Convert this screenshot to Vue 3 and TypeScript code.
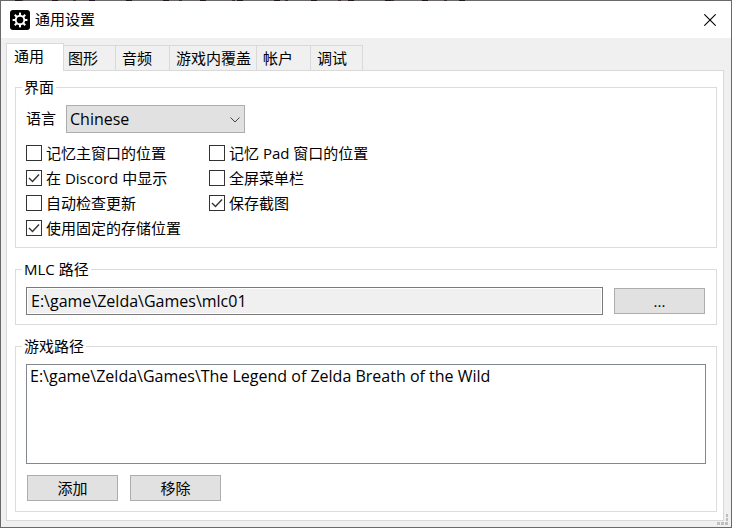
<script setup lang="ts">
import { ref } from 'vue'

interface Option {
  id: string
  label: string
  checked: boolean
}

const tabs: string[] = ['通用', '图形', '音频', '游戏内覆盖', '帐户', '调试']
const activeTab = ref(0)
const language = ref('Chinese')
const mlcPath = ref('E:\\game\\Zelda\\Games\\mlc01')
const gamePaths = ref<string[]>(['E:\\game\\Zelda\\Games\\The Legend of Zelda Breath of the Wild'])
const selectedPath = ref('')

const options = ref<Option[]>([
  { id: 'main-pos', label: '记忆主窗口的位置', checked: false },
  { id: 'pad-pos', label: '记忆 Pad 窗口的位置', checked: false },
  { id: 'discord', label: '在 Discord 中显示', checked: true },
  { id: 'menubar', label: '全屏菜单栏', checked: false },
  { id: 'updates', label: '自动检查更新', checked: false },
  { id: 'screenshot', label: '保存截图', checked: true },
  { id: 'storage', label: '使用固定的存储位置', checked: true },
])
</script>

<template>
  <div class="window">
    <header class="titlebar">
      <svg class="app-icon" viewBox="0 0 20 20" aria-hidden="true">
        <rect width="20" height="20" rx="3" fill="#000" />
        <g fill="#fff">
          <rect v-for="n in 8" :key="n" x="9" y="2.6" width="2" height="3.4" :transform="`rotate(${n * 45} 10 10)`" />
        </g>
        <circle cx="10" cy="10" r="4.3" fill="none" stroke="#fff" stroke-width="1.9" />
      </svg>
      <h1 class="title">通用设置</h1>
      <button class="close" type="button" aria-label="关闭">
        <svg viewBox="0 0 12 12" aria-hidden="true"><path d="M0.3 0.3 11.7 11.7M11.7 0.3 0.3 11.7" /></svg>
      </button>
    </header>

    <main class="body">
      <div class="tabs" role="tablist">
        <button
          v-for="(tab, i) in tabs"
          :key="tab"
          type="button"
          role="tab"
          class="tab"
          :class="{ active: i === activeTab }"
          :aria-selected="i === activeTab"
          @click="activeTab = i"
        >{{ tab }}</button>
      </div>

      <section class="panel" role="tabpanel">
        <fieldset class="group">
          <legend>界面</legend>
          <div class="language">
            <label for="language">语言</label>
            <span class="combo">
              <select id="language" v-model="language">
                <option>Chinese</option>
                <option>English</option>
              </select>
              <svg viewBox="0 0 10 6" aria-hidden="true"><path d="M0.5 0.5 5 5 9.5 0.5" /></svg>
            </span>
          </div>
          <div class="options">
            <label v-for="opt in options" :key="opt.id" class="option" :for="opt.id">
              <span class="box">
                <input :id="opt.id" v-model="opt.checked" type="checkbox" />
                <svg v-if="opt.checked" viewBox="0 0 16 16" aria-hidden="true"><path d="M3 8 6.5 11.5 13 4.5" /></svg>
              </span>
              <span>{{ opt.label }}</span>
            </label>
          </div>
        </fieldset>

        <fieldset class="group">
          <legend>MLC 路径</legend>
          <div class="path-row">
            <input class="path" type="text" aria-label="MLC 路径" readonly :value="mlcPath" />
            <button class="push" type="button">...</button>
          </div>
        </fieldset>

        <fieldset class="group">
          <legend>游戏路径</legend>
          <select v-model="selectedPath" class="list" size="4" aria-label="游戏路径">
            <option v-for="path in gamePaths" :key="path" :value="path">{{ path }}</option>
          </select>
          <div class="actions">
            <button class="push" type="button">添加</button>
            <button class="push" type="button">移除</button>
          </div>
        </fieldset>
      </section>

      <svg class="grip" viewBox="0 0 11 11" aria-hidden="true">
        <path d="M9 0h2v3h-2zM9 4h2v3h-2zM0 8h3v3h-3zM4 8h3v3h-3zM8 8h3v3h-3z" />
      </svg>
    </main>
  </div>
</template>

<style>
body {
  margin: 0;
}
</style>

<style scoped>
.window,
.window * {
  box-sizing: border-box;
}

.window {
  position: relative;
  display: flex;
  flex-direction: column;
  min-height: 100vh;
  border: 1px solid #6b6868;
  background: #f0f0f0;
  color: #000;
  font-family: "Open Sans", "Noto Sans CJK SC", sans-serif;
  font-size: 15px;
  line-height: 20px;
}

.window::before {
  content: "";
  position: absolute;
  top: -1px;
  left: 0;
  width: 476px;
  height: 1px;
  background:
    repeating-linear-gradient(90deg, transparent 0 14px, #211820 14px 20px, transparent 20px 37px),
    repeating-linear-gradient(90deg, transparent 0 19px, #3a2c2c 19px 22px, transparent 22px 53px);
}

button,
input,
select {
  margin: 0;
  font: inherit;
  color: inherit;
  border-radius: 0;
}

.titlebar {
  display: flex;
  align-items: center;
  height: 37px;
  padding-left: 9px;
  background: #fff;
}

.app-icon {
  width: 20px;
  height: 20px;
}

.title {
  flex: 1;
  margin: 0 0 0 5px;
  padding-bottom: 2px;
  font-size: 15px;
  font-weight: 400;
}

.close {
  display: flex;
  align-items: center;
  justify-content: center;
  width: 42px;
  height: 100%;
  padding: 0;
  border: 0;
  background: none;
}

.close svg {
  width: 12px;
  height: 12px;
  fill: none;
  stroke: #000;
  stroke-width: 1.1;
}

.body {
  position: relative;
  display: flex;
  flex: 1;
  flex-direction: column;
  padding: 5px 7px 6px 5px;
}

.tabs {
  display: flex;
  align-items: flex-end;
}

.tab {
  height: 25px;
  padding: 0 17px 0 6px;
  border: 1px solid #d9d9d9;
  border-width: 1px 1px 0 0;
  background: #f0f0f0;
  white-space: nowrap;
}

.tab:nth-child(2) {
  padding-left: 4px;
}

.tab:nth-child(4) {
  padding-right: 5px;
}

.tab:nth-child(6) {
  padding-right: 15px;
}

.tab.active {
  position: relative;
  height: 28px;
  margin-bottom: -1px;
  padding: 0 19px 3px 7px;
  border-left-width: 1px;
  background: #fff;
}

.panel {
  display: flex;
  flex: 1;
  flex-direction: column;
  gap: 11px;
  padding: 6px 6px 8px 8px;
  border: 1px solid #d9d9d9;
  background: #fff;
}

.group {
  min-width: 0;
  margin: 0;
  padding: 7px 10px 9px;
  border: 1px solid #dcdcdc;
}

.group:last-child {
  padding-bottom: 10px;
}

.group legend {
  height: 21px;
  margin-left: -4px;
  padding: 0 2px;
}

.language {
  display: flex;
  align-items: center;
  gap: 10px;
}

.language label {
  padding-bottom: 2px;
}

.combo {
  position: relative;
  width: 179px;
  height: 28px;
}

.combo select {
  width: 100%;
  height: 100%;
  padding: 0 24px 0 3px;
  border: 1px solid #adadad;
  background: #e1e1e1;
  font-size: 16px;
  appearance: none;
}

.combo svg {
  position: absolute;
  top: 12px;
  right: 5px;
  width: 10px;
  height: 6px;
  fill: none;
  stroke: #444;
  pointer-events: none;
}

.options {
  display: grid;
  grid-template-columns: 183px auto;
  row-gap: 5px;
  margin-top: 10px;
}

.option {
  display: flex;
  align-items: center;
  gap: 4px;
  height: 20px;
}

.box {
  display: grid;
  width: 16px;
  height: 16px;
}

.box input,
.box svg {
  grid-area: 1 / 1;
  width: 16px;
  height: 16px;
}

.box input {
  border: 1px solid #333;
  background: #fff;
  appearance: none;
}

.box svg {
  fill: none;
  stroke: #333;
  stroke-width: 1.4;
  pointer-events: none;
}

.path-row {
  display: flex;
  align-items: center;
  gap: 11px;
}

.path {
  flex: 1;
  min-width: 0;
  height: 28px;
  padding: 0 4px;
  border: 1px solid #7a7a7a;
  background: #f0f0f0;
  box-shadow: inset 0 0 0 1px #fff;
  font-size: 16px;
}

.push {
  width: 91px;
  height: 26px;
  padding: 0;
  border: 1px solid #adadad;
  background: #e1e1e1;
}

.path-row .push {
  margin-right: 1px;
}

.list {
  display: block;
  width: 100%;
  height: 100px;
  padding: 0 3px;
  border: 1px solid #828790;
  background: #fff;
  font-size: 16px;
  overflow: hidden;
  appearance: none;
}

.list option {
  min-height: 20px;
  padding: 0;
}

.actions {
  display: flex;
  gap: 12px;
  margin: 11px 0 0 1px;
}

.grip {
  position: absolute;
  right: 3px;
  bottom: 2px;
  width: 11px;
  height: 11px;
  fill: #bfbfbf;
}
</style>
